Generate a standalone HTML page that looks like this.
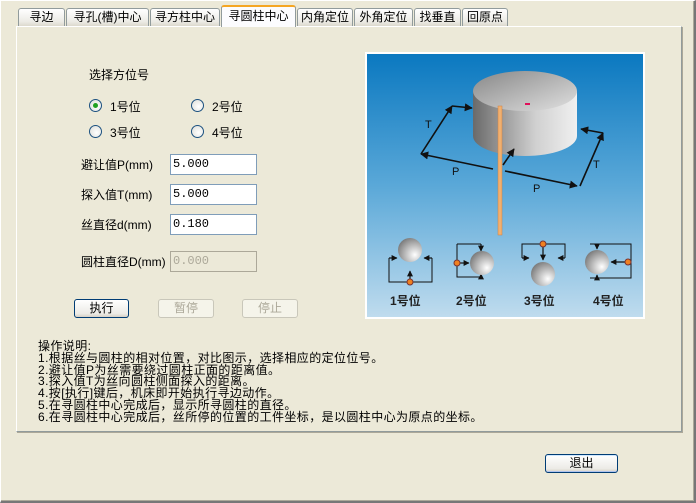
<!DOCTYPE html>
<html><head><meta charset="utf-8"><style>
*{margin:0;padding:0;box-sizing:border-box}
body{width:696px;height:503px;background:#ECE9D8;font-family:"Liberation Sans","SimSun","Noto Sans CJK SC",sans-serif;font-size:12px;color:#000;position:relative;overflow:hidden}
.frame{position:absolute;left:0;top:0;width:696px;height:503px;border:1px solid #fff;border-right:2px solid #777;border-bottom:2px solid #777;box-shadow:inset -1px -1px 0 #aca899}
.tab{position:absolute;top:8px;height:19px;background:linear-gradient(#fff,#ecebe5 70%,#d8d5c8);border:1px solid #919b9c;border-bottom:none;border-radius:3px 3px 0 0;text-align:center;line-height:17px;font-size:12px}
.tab.act{top:5px;height:22px;background:#fcfcfe;border-top:2px solid #f5a623;z-index:2;line-height:18px}
.panel{position:absolute;left:16px;top:26px;width:666px;height:406px;background:#ECE9D8;border:1px solid #919b9c;border-top-color:#fff;border-left-color:#fff;box-shadow:1px 1px 0 #aca899}
.a{position:absolute;white-space:nowrap}
.inp{position:absolute;left:170px;width:87px;height:21px;background:#fff;border:1px solid #7f9db9;padding-left:2px;line-height:19px;font-family:"Liberation Mono","SimSun",monospace;font-size:12px}
.radio{position:absolute;width:13px;height:13px;border-radius:50%;border:1px solid #1c5180;background:radial-gradient(circle at 60% 60%,#fff,#dcdcd6)}
.btn{position:absolute;top:299px;width:56px;height:19px;border:1px solid #003c74;border-radius:3px;background:linear-gradient(#fff,#ecebe6 80%,#d6d0c5);text-align:center;line-height:17px}
.dis{border-color:#c9c7ba;color:#aca899;background:#f5f4ea}
.note{position:absolute;left:38px;top:341px;font-size:12px;line-height:11.8px;letter-spacing:0.4px}
</style></head><body>
<div class="frame"></div>
<div class="tab" style="left:18px;width:47px">寻边</div>
<div class="tab" style="left:66px;width:83px">寻孔(槽)中心</div>
<div class="tab" style="left:150px;width:70px">寻方柱中心</div>
<div class="tab act" style="left:221px;width:75px">寻圆柱中心</div>
<div class="tab" style="left:297px;width:56px">内角定位</div>
<div class="tab" style="left:354px;width:59px">外角定位</div>
<div class="tab" style="left:414px;width:47px">找垂直</div>
<div class="tab" style="left:462px;width:46px">回原点</div>
<div class="panel"></div>
<div class="a" style="left:89px;top:66px">选择方位号</div>
<div class="radio" style="left:89px;top:99px"><div style="position:absolute;left:3px;top:3px;width:5px;height:5px;border-radius:50%;background:#21a121"></div></div>
<div class="a" style="left:110px;top:98px">1号位</div>
<div class="radio" style="left:191px;top:99px"></div><div class="a" style="left:212px;top:98px">2号位</div>
<div class="radio" style="left:89px;top:125px"></div><div class="a" style="left:110px;top:124px">3号位</div>
<div class="radio" style="left:191px;top:125px"></div><div class="a" style="left:212px;top:124px">4号位</div>
<div class="a" style="left:81px;top:156px">避让值P(mm)</div><div class="inp" style="top:154px">5.000</div>
<div class="a" style="left:81px;top:186px">探入值T(mm)</div><div class="inp" style="top:184px">5.000</div>
<div class="a" style="left:81px;top:216px">丝直径d(mm)</div><div class="inp" style="top:214px">0.180</div>
<div class="a" style="left:81px;top:253px">圆柱直径D(mm)</div><div class="inp" style="top:251px;background:#ECE9D8;border-color:#aca899;color:#aca899">0.000</div>
<div class="btn" style="left:74px;width:55px">执行</div>
<div class="btn dis" style="left:158px">暂停</div>
<div class="btn dis" style="left:242px">停止</div>
<svg class="a" style="left:365px;top:52px" width="280" height="267" viewBox="0 0 280 267">
<defs>
<linearGradient id="bg" x1="0" y1="0" x2="0" y2="1"><stop offset="0" stop-color="#0a78c0"/><stop offset="0.5" stop-color="#5aa8d8"/><stop offset="1" stop-color="#c0dcee"/></linearGradient>
<linearGradient id="cyl" x1="0" y1="0" x2="1" y2="0"><stop offset="0" stop-color="#6a6a6a"/><stop offset="0.6" stop-color="#d0d0d0"/><stop offset="1" stop-color="#f0f0f0"/></linearGradient>
<linearGradient id="top" x1="0" y1="0" x2="1" y2="1"><stop offset="0" stop-color="#888"/><stop offset="1" stop-color="#e0e0e0"/></linearGradient>
<radialGradient id="ball" cx="0.7" cy="0.7" r="0.8"><stop offset="0" stop-color="#fff"/><stop offset="1" stop-color="#777"/></radialGradient>
<marker id="ar" viewBox="0 0 10 10" refX="9" refY="5" markerWidth="5" markerHeight="5" orient="auto"><path d="M0,0L10,5L0,10z" fill="#111"/></marker>
</defs>
<rect x="1" y="1" width="278" height="265" fill="url(#bg)" stroke="#fff" stroke-width="2"/>
<path d="M108,39 v45 a52,20 0 0 0 104,0 v-45z" fill="url(#cyl)"/>
<ellipse cx="160" cy="39" rx="52" ry="20" fill="url(#top)"/>
<rect x="160" y="51" width="5" height="2" fill="#e0105a"/>
<rect x="133" y="54" width="4" height="129" fill="#f0b070" stroke="#d08040" stroke-width="0.5"/>
<g stroke="#111" stroke-width="1.6" fill="none" marker-end="url(#ar)">
<path d="M56,102 L87,54"/><path d="M87,54 L107,56"/><path d="M128,117 L56,102"/>
<path d="M140,119 L212,134"/><path d="M215,134 L238,81"/><path d="M238,81 L216,77"/><path d="M138,113 L149,97"/>
</g>
<g font-family="Liberation Sans" font-size="11" fill="#111"><text x="60" y="76">T</text><text x="87" y="123">P</text><text x="228" y="116">T</text><text x="168" y="140">P</text></g>
<g stroke="#111" stroke-width="1" fill="none">
<path d="M24,206 v24 h43 v-24"/><path d="M92,192 v33 h24"/><path d="M92,192 h24"/><path d="M157,206 v-14 h43 v14"/><path d="M225,192 h41 v34 h-41"/>
</g>
<g stroke="#111" stroke-width="1.2" fill="none" marker-end="url(#ar)">
<path d="M24,206 h8"/><path d="M67,206 h-8"/><path d="M45,230 v-11"/>
<path d="M92,211 h12"/><path d="M116,192 v7"/><path d="M116,225 v-3"/>
<path d="M157,206 h7"/><path d="M200,206 h-7"/><path d="M178,192 v16"/>
<path d="M263,210 h-17"/><path d="M232,192 v5"/><path d="M232,226 v-3"/>
</g>
<circle cx="45" cy="198" r="12" fill="url(#ball)"/><circle cx="45" cy="230" r="3" fill="#f08020" stroke="#733"/>
<circle cx="117" cy="211" r="12" fill="url(#ball)"/><circle cx="92" cy="211" r="3" fill="#f08020" stroke="#733"/>
<circle cx="178" cy="222" r="12" fill="url(#ball)"/><circle cx="178" cy="192" r="3" fill="#f08020" stroke="#733"/>
<circle cx="232" cy="210" r="12" fill="url(#ball)"/><circle cx="263" cy="210" r="3" fill="#f08020" stroke="#733"/>
<g font-size="12" fill="#222" font-weight="bold"><text x="25" y="253">1号位</text><text x="91" y="253">2号位</text><text x="159" y="253">3号位</text><text x="228" y="253">4号位</text></g>
</svg>
<div class="note">操作说明:<br>1.根据丝与圆柱的相对位置，对比图示，选择相应的定位位号。<br>2.避让值P为丝需要绕过圆柱正面的距离值。<br>3.探入值T为丝向圆柱侧面探入的距离。<br>4.按[执行]键后，机床即开始执行寻边动作。<br>5.在寻圆柱中心完成后，显示所寻圆柱的直径。<br>6.在寻圆柱中心完成后，丝所停的位置的工件坐标，是以圆柱中心为原点的坐标。</div>
<div class="btn" style="left:545px;top:454px;width:73px;border-color:#003c74;box-shadow:inset 0 -1px 0 #b0c4ee,inset 0 1px 0 #cee7ff">退出</div>
</body></html>
